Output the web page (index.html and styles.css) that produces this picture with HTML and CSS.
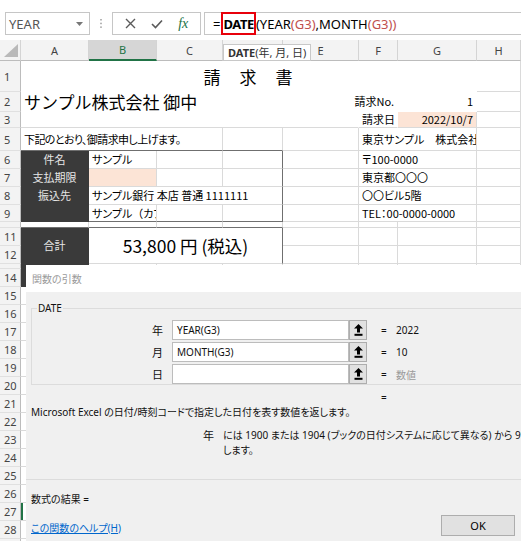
FILE: index.html
```html
<!DOCTYPE html>
<html lang="ja">
<head>
  <meta charset="UTF-8">
  <title>請求書 - 関数の引数</title>
  <link rel="stylesheet" href="styles.css">
</head>
<body>
  <div class="app">
    <div class="formula-bar">
      <div class="name-box">
        <span>YEAR</span>
        <svg class="caret" width="7" height="4" viewBox="0 0 7 4"><polygon points="0,0 7,0 3.5,4" fill="#777"/></svg>
      </div>
      <div class="grip">
        <svg width="2" height="9" viewBox="0 0 2 9"><rect x="0" y="0" width="2" height="1.5" fill="#b5b5b5"/><rect x="0" y="3.7" width="2" height="1.5" fill="#b5b5b5"/><rect x="0" y="7.4" width="2" height="1.5" fill="#b5b5b5"/></svg>
      </div>
      <div class="fx-buttons">
        <svg width="11" height="11" viewBox="0 0 11 11"><path d="M1 1 L10 10 M10 1 L1 10" stroke="#5a5a5a" stroke-width="1.4"/></svg>
        <svg width="12" height="10" viewBox="0 0 12 10"><path d="M1 5 L4.5 8.5 L11 1.5" stroke="#5a5a5a" stroke-width="1.6" fill="none"/></svg>
        <span class="fx">fx</span>
      </div>
      <div class="formula"><span class="eq">=</span><span class="hl">DATE</span><span>(YEAR</span><span class="ref">(G3)</span><span>,MONTH</span><span class="ref">(G3)</span><span class="ref">)</span></div>
    </div>

    <div class="sheet">
      <table class="grid">
        <colgroup>
          <col style="width:21px"><col style="width:68px"><col style="width:68px"><col style="width:66px"><col style="width:60px"><col style="width:76px"><col style="width:39px"><col style="width:79px"><col style="width:44px">
        </colgroup>
        <thead>
          <tr>
            <th class="corner"><svg width="14" height="13" viewBox="0 0 14 13"><polygon points="14,0 14,13 0,13" fill="#b9b9b9"/></svg></th>
            <th>A</th><th class="sel">B</th><th>C</th><th>D</th><th>E</th><th>F</th><th>G</th><th>H</th>
          </tr>
        </thead>
        <tbody id="rows">
          <tr class="r1">
            <th>1</th>
            <td colspan="7" class="blank title">請　求　書</td>
            <td></td>
          </tr>
          <tr class="r2">
            <th>2</th>
            <td colspan="4" class="blank company">サンプル株式会社 御中</td>
            <td colspan="2" class="blank right">請求No.</td>
            <td class="blank right">1</td>
            <td></td>
          </tr>
          <tr class="r3">
            <th>3</th>
            <td colspan="5" class="blank-r"></td>
            <td class="blank-r">請求日</td>
            <td class="peach right">2022/10/7</td>
            <td></td>
          </tr>
          <tr class="r5">
            <th>5</th>
            <td colspan="3" class="box-top note">下記のとおり、御請求申し上げます。</td>
            <td class="box-top"></td>
            <td></td>
            <td colspan="2">東京サンプル　株式会社</td>
            <td></td>
          </tr>
          <tr class="std">
            <th>6</th>
            <td class="dark">件名</td>
            <td>サンプル</td>
            <td></td>
            <td class="box-r"></td>
            <td></td>
            <td colspan="2">〒100-0000</td>
            <td></td>
          </tr>
          <tr class="std">
            <th>7</th>
            <td class="dark">支払期限</td>
            <td class="peach"></td>
            <td></td>
            <td class="box-r"></td>
            <td></td>
            <td colspan="2">東京都〇〇〇</td>
            <td></td>
          </tr>
          <tr class="std">
            <th>8</th>
            <td class="dark">振込先</td>
            <td colspan="3" class="box-r">サンプル銀行 本店 普通 1111111</td>
            <td></td>
            <td colspan="2">〇〇ビル5階</td>
            <td></td>
          </tr>
          <tr class="std r9">
            <th>9</th>
            <td class="dark box-b"></td>
            <td class="box-b">サンプル<span class="fw">（</span>カブシキガイシャ</td>
            <td class="box-b"></td>
            <td class="box-b box-r"></td>
            <td></td>
            <td colspan="2">TEL：00-0000-0000</td>
            <td></td>
          </tr>
          <tr class="r10">
            <th></th>
            <td class="box-top"></td><td class="box-top"></td><td class="box-top"></td><td class="box-top"></td>
            <td></td><td></td><td></td><td></td>
          </tr>
          <tr class="std">
            <th>11</th>
            <td rowspan="2" class="dark">合計</td>
            <td rowspan="2" colspan="3" class="total box-r">53,800 円 (税込)</td>
            <td></td><td></td><td></td><td></td>
          </tr>
          <tr class="std">
            <th>12</th>
            <td></td><td></td><td></td><td></td>
          </tr>
        </tbody>
      </table>

      <div class="tip"><b>DATE</b>(年, 月, 日)</div>

      <div class="dialog">
        <div class="dlg-title">関数の引数</div>
        <fieldset class="args">
          <legend>DATE</legend>
          <div class="arg">
            <label>年</label>
            <div class="arg-input">YEAR(G3)</div>
            <div class="ref-btn"><svg width="9" height="12" viewBox="0 0 9 12"><polygon points="4.5,0 9,4.5 6,4.5 6,8.5 3,8.5 3,4.5 0,4.5" fill="#000"/><rect x="0.5" y="9.8" width="8" height="2" fill="#000"/></svg></div>
            <span class="arg-eq">=</span>
            <span class="arg-val">2022</span>
          </div>
          <div class="arg">
            <label>月</label>
            <div class="arg-input">MONTH(G3)</div>
            <div class="ref-btn"><svg width="9" height="12" viewBox="0 0 9 12"><polygon points="4.5,0 9,4.5 6,4.5 6,8.5 3,8.5 3,4.5 0,4.5" fill="#000"/><rect x="0.5" y="9.8" width="8" height="2" fill="#000"/></svg></div>
            <span class="arg-eq">=</span>
            <span class="arg-val">10</span>
          </div>
          <div class="arg">
            <label>日</label>
            <div class="arg-input"></div>
            <div class="ref-btn"><svg width="9" height="12" viewBox="0 0 9 12"><polygon points="4.5,0 9,4.5 6,4.5 6,8.5 3,8.5 3,4.5 0,4.5" fill="#000"/><rect x="0.5" y="9.8" width="8" height="2" fill="#000"/></svg></div>
            <span class="arg-eq">=</span>
            <span class="arg-val muted">数値</span>
          </div>
        </fieldset>
        <div class="result">=</div>
        <div class="desc">Microsoft Excel の日付/時刻コードで指定した日付を表す数値を返します。</div>
        <div class="arg-help">
          <span class="help-name">年</span>
          <span class="help-text">には 1900 または 1904 (ブックの日付システムに応じて異なる) から 9999 までの数値を指定<br>します。</span>
        </div>
        <div class="dlg-footer">
          <div class="formula-result">数式の結果 =</div>
          <div class="footer-row">
            <a href="#" class="help-link">この関数のヘルプ(H)</a>
            <button class="ok-btn">OK</button>
          </div>
        </div>
      </div>
    </div>
  </div>

  <script>
    // 行13以降はダイアログの下に隠れる空の行
    const rows = document.getElementById('rows');
    for (let r = 13; r <= 29; r++) {
      const tr = document.createElement('tr');
      tr.className = r === 13 ? 'r13' : 'std';
      if (r === 27) tr.classList.add('active');
      let html = '<th>' + (r === 13 ? '' : r) + '</th>';
      for (let c = 0; c < 8; c++) {
        let cls = '';
        if (c === 0 && (r === 13 || r === 14)) cls = 'dark';
        if (c === 0 && r === 27) cls = 'cur';
        html += cls ? '<td class="' + cls + '"></td>' : '<td></td>';
      }
      tr.innerHTML = html;
      rows.appendChild(tr);
    }
  </script>
</body>
</html>
```

FILE: styles.css
```css
:root {
  --grid: #dadada;
  --header-bg: #f3f3f3;
  --header-text: #444;
  --excel-green: #217346;
  --peach: #fce4d6;
  --dark-cell: #3a3a3a;
  --box-line: #6f6f6f;
}

* {
  box-sizing: border-box;
}

body {
  margin: 0;
  background: #fff;
  color: #000;
  font-family: "Noto Sans CJK JP", sans-serif;
}

.app {
  width: 521px;
  height: 541px;
  overflow: hidden;
}

/* Formula bar */
.formula-bar {
  display: flex;
  align-items: flex-start;
  height: 40px;
  padding-top: 12px;
  font-family: "Noto Sans", "Noto Sans CJK JP", sans-serif;
}

.name-box {
  margin-left: 5px;
  width: 85px;
  height: 23px;
  border: 1px solid #c6c6c6;
  display: flex;
  align-items: center;
  justify-content: space-between;
  padding: 0 6px 0 3px;
  font-size: 13px;
  color: #555;
}

.grip {
  width: 22px;
  height: 23px;
  display: flex;
  align-items: center;
  justify-content: center;
}

.fx-buttons {
  width: 89px;
  height: 23px;
  border: 1px solid #c6c6c6;
  display: flex;
  align-items: center;
  justify-content: space-around;
  padding: 0 4px;
}

.fx {
  font-family: "Liberation Serif", serif;
  font-style: italic;
  font-size: 14px;
  color: var(--excel-green);
}

.formula {
  margin-left: 3px;
  flex: 1;
  height: 23px;
  border: 1px solid #c6c6c6;
  border-right: none;
  display: flex;
  align-items: center;
  padding-left: 8px;
  font-size: 13px;
  white-space: nowrap;
}

.formula .eq {
  margin-right: 1px;
}

.formula .hl {
  align-self: stretch;
  display: flex;
  align-items: center;
  margin: -1px 0;
  padding: 0;
  border: 2px solid #e8000b;
  font-weight: bold;
  letter-spacing: -0.4px;
}

.formula .ref {
  color: #c0504d;
}

/* Sheet */
.sheet {
  position: relative;
}

.grid {
  border-collapse: separate;
  border-spacing: 0;
  table-layout: fixed;
  width: 521px;
  font-size: 11px;
  font-feature-settings: "palt";
}

.grid thead th {
  height: 21px;
  padding: 0;
  background: var(--header-bg);
  color: var(--header-text);
  font-family: "Noto Sans", sans-serif;
  font-weight: normal;
  font-size: 11px;
  border-right: 1px solid #d4d4d4;
  border-bottom: 1px solid #bcbcbc;
}

.grid thead th.sel {
  background: #d6d6d6;
  color: var(--excel-green);
  border-bottom: 2px solid var(--excel-green);
}

.grid thead th.corner {
  text-align: right;
  vertical-align: bottom;
  padding: 0 2px 3px 0;
  line-height: 0;
}

.grid tbody th {
  padding: 0 0 0 4px;
  background: var(--header-bg);
  color: var(--header-text);
  font-family: "Noto Sans", sans-serif;
  font-weight: normal;
  font-size: 11px;
  text-align: left;
  line-height: 1;
  border-right: 1px solid #bcbcbc;
  border-bottom: 1px solid #e0e0e0;
}

.grid td {
  padding: 0 3px;
  border-right: 1px solid var(--grid);
  border-bottom: 1px solid var(--grid);
  white-space: nowrap;
  overflow: hidden;
  line-height: 1;
}

.r1 { height: 31px; }
.r2 { height: 20px; }
.r3 { height: 16px; }
.r5 { height: 23px; }
.std { height: 18px; }
.r9 { height: 17px; }
.r10 { height: 6px; }
.r13 { height: 5px; }

.grid td.blank {
  border-color: #fff;
}

.grid td.blank-r {
  border-right-color: #fff;
}

.grid td.right {
  text-align: right;
}

.title {
  text-align: center;
  font-size: 17px;
  letter-spacing: 1px;
  font-feature-settings: normal;
}

.company {
  font-size: 17px;
  font-feature-settings: normal;
  overflow: visible;
  padding-left: 4px;
}

.note {
  letter-spacing: -0.6px;
}

.fw {
  font-feature-settings: normal;
}

.grid td.peach {
  background: var(--peach);
}

.grid td.box-top {
  border-bottom-color: var(--box-line);
}

.grid td.box-r {
  border-right-color: var(--box-line);
}

.grid td.box-b {
  border-bottom-color: var(--box-line);
}

.grid td.dark {
  background: var(--dark-cell);
  border-color: var(--dark-cell);
  color: #e6e6e6;
  text-align: center;
}

.grid td.total {
  text-align: center;
  font-size: 17.5px;
  font-feature-settings: normal;
}

.active th {
  background: #d6d6d6;
  color: var(--excel-green);
}

.grid td.cur {
  box-shadow: inset 2px 0 0 var(--excel-green);
}

/* Function tooltip */
.tip {
  position: absolute;
  left: 223px;
  top: 4px;
  height: 17px;
  padding: 0 4px;
  background: #fff;
  border: 1px solid #c8c8c8;
  font-family: "Noto Sans", "Noto Sans CJK JP", sans-serif;
  font-size: 11px;
  line-height: 15px;
  color: #333;
}

/* Function arguments dialog */
.dialog {
  position: absolute;
  left: 26px;
  top: 225px;
  width: 495px;
  height: 276px;
  overflow: hidden;
  background: #f0f0f0;
  font-family: "Noto Sans", "Noto Sans CJK JP", sans-serif;
  font-size: 10px;
  font-feature-settings: "palt";
  color: #111;
}

.dlg-title {
  height: 27px;
  padding-left: 6px;
  background: #fff;
  color: #9a9a9a;
  line-height: 29px;
}

.args {
  width: 540px;
  height: 83px;
  margin: 10px 0 0 5px;
  padding: 0;
  border: 1px solid #dcdcdc;
}

.args legend {
  margin-left: 5px;
  padding: 0 1px;
  line-height: 13px;
}

.arg {
  display: flex;
  align-items: center;
  height: 20px;
  margin-top: 2px;
}

.arg:first-of-type {
  margin-top: 5px;
}

.arg label {
  width: 131px;
  text-align: right;
  font-size: 11px;
}

.arg-input {
  width: 177px;
  height: 20px;
  margin-left: 9px;
  padding-left: 4px;
  background: #fff;
  border: 1px solid #bcbcbc;
  line-height: 18px;
}

.ref-btn {
  width: 18px;
  height: 20px;
  border: 1px solid #adadad;
  background: #e1e1e1;
  display: flex;
  align-items: center;
  justify-content: center;
}

.arg-eq {
  margin-left: 14px;
  width: 15px;
}

.muted {
  color: #9a9a9a;
}

.result {
  height: 16px;
  margin-top: 4px;
  padding-left: 355px;
  line-height: 16px;
}

.desc {
  padding-left: 5px;
  line-height: 14px;
}

.arg-help {
  display: flex;
  margin-top: 9px;
  line-height: 15px;
  white-space: nowrap;
}

.help-name {
  flex-shrink: 0;
  width: 197px;
  text-align: right;
  padding-right: 9px;
  font-size: 11px;
}

.dlg-footer {
  margin-top: 21px;
  border-top: 1px solid #dcdcdc;
  padding: 12px 6px 0 5px;
}

.formula-result {
  line-height: 14px;
}

.footer-row {
  display: flex;
  justify-content: space-between;
  align-items: center;
  margin-top: 12px;
}

.help-link {
  color: #0066cc;
  text-decoration: underline;
}

.ok-btn {
  width: 74px;
  height: 21px;
  margin-top: -3px;
  background: #e1e1e1;
  border: 1px solid #adadad;
  font-family: inherit;
  font-size: 11px;
  color: #000;
}
```
